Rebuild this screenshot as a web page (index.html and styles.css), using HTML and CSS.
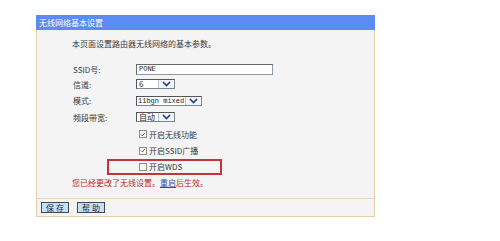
FILE: index.html
```html
<!DOCTYPE html>
<html lang="zh-CN">
<head>
<meta charset="utf-8">
<title>无线网络基本设置</title>
<link rel="stylesheet" href="styles.css">
</head>
<body>
<div class="panel">
  <div class="hd">无线网络基本设置</div>
  <div class="bd">
    <div class="intro">本页面设置路由器无线网络的基本参数。</div>
    <div class="form">
      <div class="row r1"><span class="lbl">SSID号:</span><span class="input">PONE</span></div>
      <div class="row r2"><span class="lbl">信道:</span><span class="sel w40"><span class="val">6</span><span class="arr"><svg width="9" height="6" viewBox="0 0 9 6"><path d="M1 1 L4.5 4.5 L8 1" fill="none" stroke="#1d3f8a" stroke-width="1.6"/></svg></span></span></div>
      <div class="row r3"><span class="lbl">模式:</span><span class="sel w66"><span class="val mono">11bgn mixed</span><span class="arr"><svg width="9" height="6" viewBox="0 0 9 6"><path d="M1 1 L4.5 4.5 L8 1" fill="none" stroke="#1d3f8a" stroke-width="1.6"/></svg></span></span></div>
      <div class="row r4"><span class="lbl">频段带宽:</span><span class="sel w40"><span class="val">自动</span><span class="arr"><svg width="9" height="6" viewBox="0 0 9 6"><path d="M1 1 L4.5 4.5 L8 1" fill="none" stroke="#1d3f8a" stroke-width="1.6"/></svg></span></span></div>
      <div class="row chk c1"><span class="cb on"><svg width="7" height="7" viewBox="0 0 7 7"><path d="M1.2 3.5 L2.8 5.2 L5.8 1.5" fill="none" stroke="#555" stroke-width="1.1"/></svg></span><span>开启无线功能</span></div>
      <div class="row chk c2"><span class="cb on"><svg width="7" height="7" viewBox="0 0 7 7"><path d="M1.2 3.5 L2.8 5.2 L5.8 1.5" fill="none" stroke="#555" stroke-width="1.1"/></svg></span><span>开启SSID广播</span></div>
      <div class="row chk wds"><span class="cb"></span><span>开启WDS</span></div>
    </div>
    <div class="notice">您已经更改了无线设置。<a href="#">重启</a>后生效。</div>
  </div>
  <div class="ft">
    <button class="btn">保 存</button>
    <button class="btn">帮 助</button>
  </div>
</div>
</body>
</html>
```

FILE: styles.css
```css
html, body {
  margin: 0;
  padding: 0;
  background: #ffffff;
}
body {
  font-family: "Noto Sans CJK SC", "Noto Sans", sans-serif;
  font-size: 8px;
  color: #3a3a3a;
}
.panel {
  margin: 15px 0 0 36px;
  width: 339px;
  box-sizing: border-box;
  border: 1px solid #e6cfa8;
  border-top: none;
}
.hd {
  height: 15px;
  line-height: 15px;
  background: #5b8cf4;
  color: #fff;
  padding-left: 3px;
  margin: 0 -1px;
}
.bd {
  background: #f4f4f4;
  height: 169px;
  box-sizing: border-box;
  border-bottom: 1px solid #ead6b4;
}
.intro {
  padding: 9px 0 0 35px;
  line-height: 10px;
  height: 10px;
}
.form {
  padding: 13px 0 0 36px;
}
.row {
  display: flex;
  align-items: center;
  height: 17px;
}
.row.r1 { height: 14px; }
.row.r2 { height: 16px; }
.row.r3 { height: 17px; }
.row.r4 { height: 16px; }
.row.c1 { height: 18px; }
.row.c2 { height: 15px; }
.lbl {
  width: 63px;
  flex: none;
}
.input {
  box-sizing: border-box;
  width: 137px;
  height: 11px;
  background: #fff;
  border: 1px solid #8a9aa8;
  border-top-color: #666;
  border-left-color: #666;
  font-family: "Liberation Mono", monospace;
  font-size: 7px;
  line-height: 9px;
  padding-left: 2px;
  color: #222;
}
.sel {
  box-sizing: border-box;
  display: flex;
  height: 10px;
  background: #fff;
  border: 1px solid #7a8894;
  border-top-color: #555;
  border-left-color: #555;
  white-space: nowrap;
}
.sel.w40 { width: 39px; }
.sel.w66 { width: 66px; }
.val {
  flex: 1;
  display: flex;
  align-items: center;
  padding-left: 2px;
  line-height: 8px;
  color: #222;
}
.val.mono {
  font-family: "Liberation Mono", monospace;
  font-size: 7px;
  padding-left: 1px;
}
.arr {
  width: 15px;
  flex: none;
  display: flex;
  align-items: center;
  justify-content: center;
  background: #f2f4fa;
  border-left: 1px solid #b8c4d4;
}
.chk {
  padding-left: 66px;
  gap: 2px;
}
.cb {
  box-sizing: border-box;
  width: 8px;
  height: 8px;
  border: 1px solid #8c8c8c;
  background: #fafafa;
  display: flex;
  align-items: center;
  justify-content: center;
}
.cb svg { display: block; }
.wds {
  position: relative;
}
.wds::before {
  content: "";
  position: absolute;
  left: 34px;
  top: 1px;
  width: 115px;
  height: 16px;
  box-sizing: border-box;
  border: 2px solid #c4343a;
}
.notice {
  padding: 3px 0 0 35px;
  line-height: 10px;
  color: #c0282c;
}
.notice a {
  color: #2a4fb0;
  text-decoration: underline;
}
.ft {
  background: #f4f4f4;
  height: 17px;
  display: flex;
  align-items: center;
  gap: 8px;
  padding-left: 4px;
}
.btn {
  font-family: "Noto Sans CJK SC", sans-serif;
  font-size: 8px;
  height: 11px;
  width: 28px;
  padding: 0;
  margin: 0;
  line-height: 9px;
  background: #c6e2f2;
  border: 1px solid #3c4a5c;
  color: #1a2a50;
}
```
